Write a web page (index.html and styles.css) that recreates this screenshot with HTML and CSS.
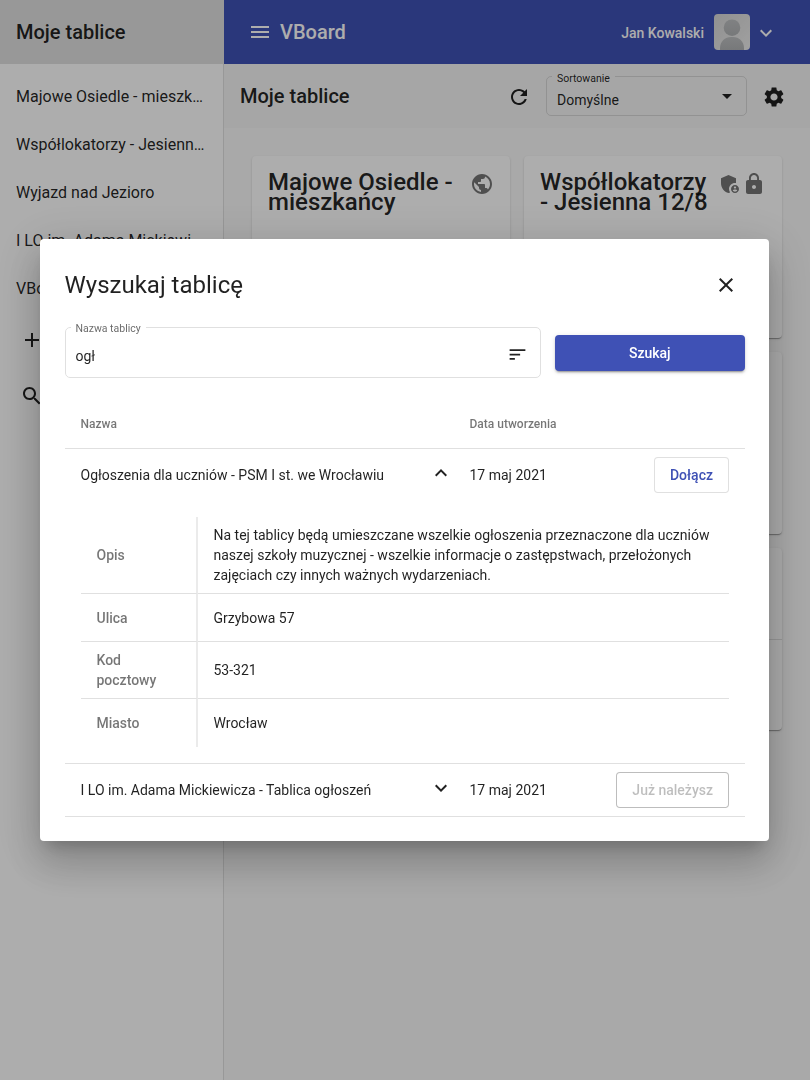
FILE: index.html
```html
<!DOCTYPE html>
<html lang="pl">
<head>
<meta charset="utf-8">
<title>VBoard</title>
<link rel="stylesheet" href="styles.css">
</head>
<body>
<div class="app">
  <aside class="sidebar">
    <div class="sidebar-head">Moje tablice</div>
    <nav class="sidebar-list">
      <a class="sidebar-item">Majowe Osiedle - mieszkańcy</a>
      <a class="sidebar-item">Współlokatorzy - Jesienna 12/8</a>
      <a class="sidebar-item">Wyjazd nad Jezioro</a>
      <a class="sidebar-item">I LO im. Adama Mickiewicza</a>
      <a class="sidebar-item">VBoard</a>
    </nav>
    <div class="sidebar-action"><svg class="icon" viewBox="0 0 24 24"><path d="M19 13h-6v6h-2v-6H5v-2h6V5h2v6h6v2z"/></svg></div>
    <div class="sidebar-action"><svg class="icon" viewBox="0 0 24 24"><path d="M15.5 14h-.79l-.28-.27C15.41 12.59 16 11.11 16 9.5 16 5.91 13.09 3 9.5 3S3 5.91 3 9.5 5.91 16 9.5 16c1.61 0 3.09-.59 4.23-1.57l.27.28v.79l5 4.99L20.49 19l-4.99-5zm-6 0C7.01 14 5 11.99 5 9.5S7.01 5 9.5 5 14 7.01 14 9.5 11.99 14 9.5 14z"/></svg></div>
  </aside>
  <div class="main">
    <header class="navbar">
      <svg class="icon" viewBox="0 0 24 24"><path d="M3 18h18v-2H3v2zm0-5h18v-2H3v2zm0-7v2h18V6H3z"/></svg>
      <span class="brand">VBoard</span>
      <span class="user">Jan Kowalski</span>
      <svg class="avatar" viewBox="0 0 36 36">
        <defs>
          <linearGradient id="avatarBg" x1="0" y1="0" x2="1" y2="1"><stop offset="0" stop-color="#d6d6d6"/><stop offset="1" stop-color="#ececec"/></linearGradient>
          <linearGradient id="avatarFg" x1="0" y1="0" x2="0" y2="1"><stop offset="0" stop-color="#bdbfc1"/><stop offset="1" stop-color="#b0b2b4"/></linearGradient>
        </defs>
        <rect width="36" height="36" fill="url(#avatarBg)"/>
        <circle cx="18" cy="13.7" r="8.3" fill="url(#avatarFg)"/>
        <path d="M6 36v-2c0-6.500 5-11 11-11h2c6 0 11 4.500 11 11v2z" fill="url(#avatarFg)"/>
      </svg>
      <svg class="icon user-chevron" viewBox="0 0 24 24"><path d="M16.590 8.590L12 13.170 7.410 8.590 6 10l6 6 6-6z"/></svg>
    </header>
    <div class="toolbar">
      <h1 class="page-title">Moje tablice</h1>
      <svg class="icon" viewBox="0 0 24 24"><path d="M17.650 6.350C16.200 4.900 14.210 4 12 4c-4.420 0-7.990 3.580-7.990 8s3.570 8 7.990 8c3.730 0 6.840-2.550 7.730-6h-2.080c-.82 2.330-3.040 4-5.650 4-3.310 0-6-2.690-6-6s2.690-6 6-6c1.660 0 3.140.69 4.220 1.780L13 11h7V4l-2.350 2.350z"/></svg>
      <fieldset class="field sort">
        <legend>Sortowanie</legend>
        <div class="field-row"><span>Domyślne</span><i class="caret"></i></div>
      </fieldset>
      <svg class="icon" viewBox="0 0 24 24"><path d="M19.140 12.940c.04-.3.06-.61.06-.94 0-.32-.02-.64-.07-.94l2.030-1.580c.18-.14.23-.41.12-.61l-1.920-3.320c-.12-.22-.37-.29-.59-.22l-2.390.96c-.5-.38-1.030-.7-1.620-.94l-.36-2.540c-.04-.24-.24-.41-.48-.41h-3.840c-.24 0-.43.17-.47.41l-.36 2.540c-.59.24-1.130.57-1.620.94l-2.390-.96c-.22-.08-.47 0-.59.22L2.740 8.870c-.12.21-.08.47.12.61l2.030 1.580c-.05.3-.09.63-.09.94s.02.64.07.94l-2.030 1.580c-.18.14-.23.41-.12.61l1.920 3.320c.12.22.37.29.59.22l2.390-.96c.5.38 1.030.7 1.620.94l.36 2.540c.05.24.24.41.48.41h3.840c.24 0 .44-.17.47-.41l.36-2.540c.59-.24 1.130-.56 1.620-.94l2.390.96c.22.08.47 0 .59-.22l1.920-3.320c.12-.22.07-.47-.12-.61l-2.010-1.580zM12 15.600c-1.980 0-3.600-1.620-3.600-3.600s1.620-3.600 3.600-3.600 3.600 1.620 3.600 3.600-1.620 3.600-3.600 3.600z"/></svg>
    </div>
    <div class="boards">
      <div class="board"><h2>Majowe Osiedle - mieszkańcy</h2>
        <svg class="icon muted" viewBox="0 0 24 24"><path d="M12 2C6.480 2 2 6.480 2 12s4.480 10 10 10 10-4.480 10-10S17.520 2 12 2zm-1 17.930c-3.950-.49-7-3.850-7-7.930 0-.62.08-1.210.21-1.790L9 15v1c0 1.100.9 2 2 2v1.930zm6.900-2.540c-.26-.81-1-1.390-1.900-1.390h-1v-3c0-.55-.45-1-1-1H8v-2h2c.55 0 1-.45 1-1V7h2c1.100 0 2-.9 2-2v-.41c2.930 1.190 5 4.060 5 7.410 0 2.080-.8 3.970-2.100 5.390z"/></svg>
      </div>
      <div class="board"><h2>Współlokatorzy - Jesienna 12/8</h2>
        <svg class="icon muted" viewBox="0 0 24 24"><path d="M17 11c.34 0 .67.04 1 .09V6.270L10.500 3 3 6.270v4.910c0 4.540 3.200 8.790 7.500 9.820.55-.13 1.080-.32 1.600-.55-.69-.98-1.100-2.170-1.100-3.450 0-3.310 2.690-6 6-6z"/><path fill-rule="evenodd" d="M17 13c-2.210 0-4 1.790-4 4s1.790 4 4 4 4-1.790 4-4-1.790-4-4-4zm0 1.380c.62 0 1.120.51 1.120 1.120s-.51 1.120-1.120 1.120-1.120-.51-1.120-1.120.5-1.120 1.120-1.120zm0 5.370c-.93 0-1.740-.46-2.240-1.170.05-.72 1.510-1.080 2.240-1.080s2.190.36 2.240 1.080c-.5.71-1.310 1.170-2.240 1.170z"/></svg>
        <svg class="icon muted" viewBox="0 0 24 24"><path d="M18 8h-1V6c0-2.760-2.240-5-5-5S7 3.240 7 6v2H6c-1.100 0-2 .9-2 2v10c0 1.100.9 2 2 2h12c1.100 0 2-.9 2-2V10c0-1.100-.9-2-2-2zm-6 9c-1.100 0-2-.9-2-2s.9-2 2-2 2 .9 2 2-.9 2-2 2zm3.100-9H8.900V6c0-1.710 1.390-3.100 3.100-3.100s3.100 1.390 3.100 3.100v2z"/></svg>
      </div>
      <div class="board"></div>
      <div class="board"></div>
      <div class="board"></div>
      <div class="board split"><div class="half"></div></div>
    </div>
  </div>
</div>

<div class="backdrop">
  <section class="dialog">
    <div class="dialog-head">
      <h2>Wyszukaj tablicę</h2>
      <svg class="icon" viewBox="0 0 24 24"><path d="M19 6.410L17.590 5 12 10.590 6.410 5 5 6.410 10.590 12 5 17.590 6.410 19 12 13.410 17.590 19 19 17.590 13.410 12z"/></svg>
    </div>
    <div class="search">
      <fieldset class="field query">
        <legend>Nazwa tablicy</legend>
        <div class="field-row"><span>ogł</span><svg class="icon small" viewBox="0 0 24 24"><path d="M3 18h6v-2H3v2zM3 6v2h18V6H3zm0 7h12v-2H3v2z"/></svg></div>
      </fieldset>
      <button class="btn primary">Szukaj</button>
    </div>
    <div class="results">
      <div class="row head"><span>Nazwa</span><span></span><span>Data utworzenia</span><span></span></div>
      <div class="row">
        <span>Ogłoszenia dla uczniów - PSM I st. we Wrocławiu</span>
        <svg class="icon" viewBox="0 0 24 24"><path d="M12 8l-6 6 1.410 1.410L12 10.830l4.590 4.580L18 14z"/></svg>
        <span>17 maj 2021</span>
        <button class="btn outline">Dołącz</button>
      </div>
      <div class="details">
        <div class="term">Opis</div><div class="value">Na tej tablicy będą umieszczane wszelkie ogłoszenia przeznaczone dla uczniów naszej szkoły muzycznej - wszelkie informacje o zastępstwach, przełożonych zajęciach czy innych ważnych wydarzeniach.</div>
        <div class="term">Ulica</div><div class="value">Grzybowa 57</div>
        <div class="term">Kod pocztowy</div><div class="value">53-321</div>
        <div class="term">Miasto</div><div class="value">Wrocław</div>
      </div>
      <div class="row last">
        <span>I LO im. Adama Mickiewicza - Tablica ogłoszeń</span>
        <svg class="icon" viewBox="0 0 24 24"><path d="M16.590 8.590L12 13.170 7.410 8.590 6 10l6 6 6-6z"/></svg>
        <span>17 maj 2021</span>
        <button class="btn outline" disabled>Już należysz</button>
      </div>
    </div>
  </section>
</div>
</body>
</html>
```

FILE: styles.css
```css
* { box-sizing: border-box; }
body {
  margin: 0;
  height: 1080px;
  overflow: hidden;
  font: 400 14px/20px Roboto, sans-serif;
  color: rgba(0, 0, 0, .87);
  background: #fafafa;
}
h1, h2 { margin: 0; }
.icon { display: block; width: 24px; height: 24px; flex: none; fill: currentColor; }
.icon.small { width: 21px; height: 21px; }
.icon.muted { fill: rgba(0, 0, 0, .54); }

.app { display: flex; height: 1080px; }

/* sidebar */
.sidebar { width: 224px; flex: none; background: #fff; border-right: 1px solid rgba(0, 0, 0, .12); }
.sidebar-head {
  width: 224px;
  height: 64px;
  padding: 0 16px;
  font: 500 20px/64px Roboto, sans-serif;
  background: #e0e0e0;
}
.sidebar-list { height: 248px; padding-top: 9px; }
.sidebar-item {
  display: block;
  padding: 0 16px;
  font-size: 16px;
  line-height: 48px;
  white-space: nowrap;
  overflow: hidden;
  text-overflow: ellipsis;
}
.sidebar-action { height: 56px; padding: 16px 20px; }

/* main area */
.main { flex: 1; min-width: 0; }
.navbar {
  display: flex;
  align-items: center;
  height: 64px;
  padding: 0 32px 0 24px;
  color: #fff;
  background: #3f51b5;
}
.brand { flex: 1; padding-left: 8px; font: 500 20px/32px Roboto, sans-serif; }
.user { font-weight: 500; margin: 1px 10px 0 0; }
.avatar { width: 36px; height: 36px; border-radius: 4px; margin-right: 4px; }
.user-chevron { margin-top: 1px; }
.toolbar {
  display: flex;
  align-items: center;
  height: 64px;
  padding: 2px 24px 0 16px;
  background: #f5f5f5;
}
.page-title { flex: 1; margin-top: -2px; font: 500 20px/32px Roboto, sans-serif; }
.boards {
  display: grid;
  grid-template-columns: 1fr 1fr;
  grid-auto-rows: 182px;
  gap: 14px;
  padding: 28px;
}
.board {
  display: flex;
  padding: 16px;
  border-radius: 4px;
  background: #fff;
  box-shadow: 0 2px 1px -1px rgba(0, 0, 0, .2), 0 1px 1px 0 rgba(0, 0, 0, .14), 0 1px 3px 0 rgba(0, 0, 0, .12);
}
.board h2 { flex: 1; font: 500 24px/20px Roboto, sans-serif; }
.split { padding: 0; }
.half { flex: 1; height: 92px; border-bottom: 1px solid rgba(0, 0, 0, .12); }

/* outlined fields */
.field {
  min-width: 0;
  margin: 0;
  padding: 0 10px;
  border: 1px solid rgba(0, 0, 0, .12);
  border-radius: 5px;
}
.field legend { padding: 5px 5px 0; margin-left: -5px; font-size: 10.5px; line-height: 12px; }
.field-row { display: flex; align-items: center; justify-content: space-between; }
.sort { width: 201px; height: 48px; margin: -10px 15px 0; }
.sort .field-row { height: 23px; padding-top: 6px; }
.caret { border: 5px solid transparent; border-top-color: currentColor; border-bottom: 0; margin: -6px 4px 0 0; }

/* dialog */
.backdrop {
  position: fixed;
  inset: 0;
  display: flex;
  align-items: center;
  justify-content: center;
  background: rgba(0, 0, 0, .32);
}
.dialog {
  width: 729px;
  height: 602px;
  padding: 24px 24px 24px 24.5px;
  margin-right: 1px;
  border-radius: 4px;
  background: #fff;
  box-shadow: 0 11px 15px -7px rgba(0, 0, 0, .2), 0 24px 38px 3px rgba(0, 0, 0, .14), 0 9px 46px 8px rgba(0, 0, 0, .12);
}
.dialog-head { display: flex; align-items: center; justify-content: space-between; height: 44px; padding-right: 7.500px; }
.dialog-head h2 { font: 400 24px/32px Roboto, sans-serif; }
.search { display: flex; align-items: flex-start; gap: 14px; padding-top: 12px; }
.query { width: 476px; height: 59px; border-color: #e0e0e0; }
.query legend { padding-top: 4px; color: rgba(0, 0, 0, .6); }
.query .field-row { height: 30px; margin-top: 6px; }
.query .icon { margin: -4px 2px 0 0; }
.btn {
  height: 36px;
  padding: 0 15px;
  border: 1px solid rgba(0, 0, 0, .12);
  border-radius: 4px;
  background: #fff;
  font: 500 14px/34px Roboto, sans-serif;
  white-space: nowrap;
}
.primary {
  flex: 1;
  margin-top: 15.500px;
  border: 0;
  color: #fff;
  background: #3f51b5;
  box-shadow: 0 3px 1px -2px rgba(0, 0, 0, .2), 0 2px 2px 0 rgba(0, 0, 0, .14), 0 1px 5px 0 rgba(0, 0, 0, .12);
}
.outline { justify-self: end; color: #3f51b5; }
.outline:disabled { color: rgba(0, 0, 0, .26); border-color: rgba(0, 0, 0, .26); }
.results { padding-top: 22px; }
.row {
  display: grid;
  grid-template-columns: 348px 41px 120px 1fr;
  align-items: center;
  height: 52px;
  padding: 0 16px;
}
.row .icon { margin-top: -5px; }
.head {
  height: 49px;
  font: 500 12px/20px Roboto, sans-serif;
  color: rgba(0, 0, 0, .54);
  border-bottom: 1px solid rgba(0, 0, 0, .12);
}
.details { display: grid; grid-template-columns: 117px 1fr; grid-template-rows: 77px 48px 57px 48px; margin: 16px 16px; }
.term, .value { display: flex; align-items: center; padding: 0 16px; border-bottom: 1px solid rgba(0, 0, 0, .12); }
.term { padding-right: 30px; font-weight: 500; color: rgba(0, 0, 0, .54); border-right: 2px solid #ebebeb; }
.details > :nth-last-child(-n+2) { border-bottom: 0; }
.value { padding-right: 10px; }
.last { height: 54px; border-top: 1px solid rgba(0, 0, 0, .12); border-bottom: 1px solid rgba(0, 0, 0, .12); }
```
